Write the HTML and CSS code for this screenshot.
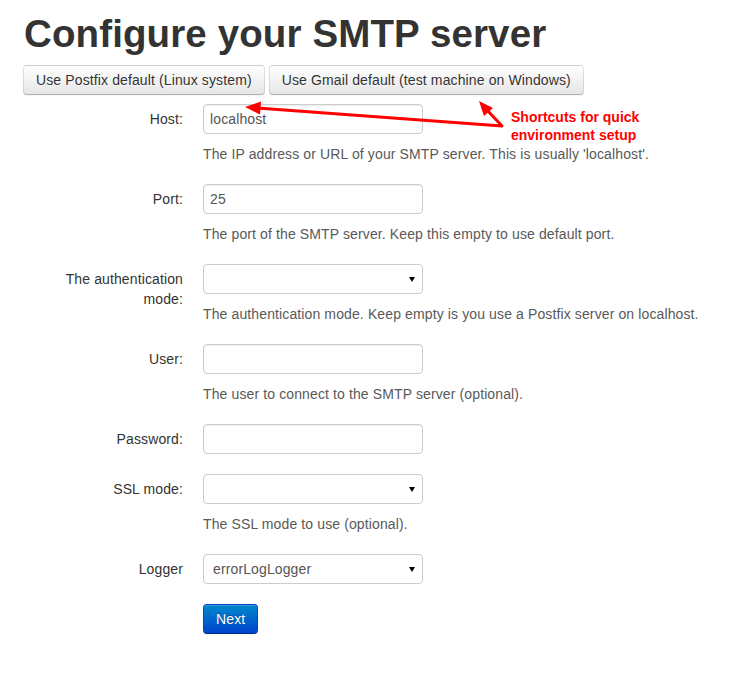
FILE: index.html
```html
<!DOCTYPE html>
<html>
<head>
<meta charset="utf-8">
<link rel="stylesheet" href="styles.css">
</head>
<body>
<div class="page">
  <h1 class="title">Configure your SMTP server</h1>
  <div class="shortcuts">
    <button class="btn">Use Postfix default (Linux system)</button>
    <button class="btn">Use Gmail default (test machine on Windows)</button>
  </div>
  <form class="form">
    <div class="group">
      <label class="label">Host:</label>
      <div class="controls">
        <input class="input" type="text" value="localhost">
        <span class="help">The IP address or URL of your SMTP server. This is usually 'localhost'.</span>
      </div>
    </div>
    <div class="group">
      <label class="label">Port:</label>
      <div class="controls">
        <input class="input" type="text" value="25">
        <span class="help">The port of the SMTP server. Keep this empty to use default port.</span>
      </div>
    </div>
    <div class="group">
      <label class="label">The authentication mode:</label>
      <div class="controls">
        <span class="select-wrap"><select class="select"><option></option></select></span>
        <span class="help">The authentication mode. Keep empty is you use a Postfix server on localhost.</span>
      </div>
    </div>
    <div class="group">
      <label class="label">User:</label>
      <div class="controls">
        <input class="input" type="text" value="">
        <span class="help">The user to connect to the SMTP server (optional).</span>
      </div>
    </div>
    <div class="group">
      <label class="label">Password:</label>
      <div class="controls">
        <input class="input" type="password" value="">
      </div>
    </div>
    <div class="group">
      <label class="label">SSL mode:</label>
      <div class="controls">
        <span class="select-wrap"><select class="select"><option></option></select></span>
        <span class="help">The SSL mode to use (optional).</span>
      </div>
    </div>
    <div class="group">
      <label class="label">Logger</label>
      <div class="controls">
        <span class="select-wrap"><select class="select"><option>errorLogLogger</option></select></span>
      </div>
    </div>
    <div class="group">
      <div class="label"></div>
      <div class="controls">
        <button type="button" class="btn btn-primary">Next</button>
      </div>
    </div>
  </form>
  <div class="note">Shortcuts for quick<br>environment setup</div>
  <svg class="arrows" width="740" height="679" viewBox="0 0 740 679">
    <g stroke="#f00" stroke-width="3" fill="none" stroke-linecap="round" stroke-linejoin="round">
      <polyline points="257,94 502,112 487,96"/>
    </g>
    <g fill="#f00">
      <polygon points="245,93 260,100.5 261,87.5"/>
      <polygon points="479,87 484,102 493,94"/>
    </g>
  </svg>
</div>
</body>
</html>
```

FILE: styles.css
```css
html, body {
  margin: 0;
  padding: 0;
  background: #fff;
}
body {
  font-family: "Liberation Sans", Arial, sans-serif;
  font-size: 14px;
  line-height: 20px;
  letter-spacing: 0.12px;
  color: #333;
}
.page {
  position: relative;
  width: 740px;
  height: 679px;
  padding: 0 0 0 23px;
  box-sizing: border-box;
}
.title {
  font-size: 38.5px;
  line-height: 40px;
  font-weight: bold;
  margin: 14px 0 11px 1px;
  color: #333;
}
.shortcuts {
  display: flex;
  gap: 4px;
  margin-bottom: 9px;
}
.btn {
  font-family: "Liberation Sans", Arial, sans-serif;
  font-size: 14px;
  line-height: 20px;
  letter-spacing: 0.12px;
  padding: 4px 12px;
  color: #333;
  text-shadow: 0 1px 1px rgba(255,255,255,.75);
  background: linear-gradient(to bottom, #ffffff, #e6e6e6);
  border: 1px solid #cccccc;
  border-color: rgba(0,0,0,.1) rgba(0,0,0,.1) #b3b3b3;
  border-radius: 4px;
  box-shadow: inset 0 1px 0 rgba(255,255,255,.2), 0 1px 2px rgba(0,0,0,.05);
  margin: 0;
  cursor: pointer;
}
.btn-primary {
  color: #fff;
  text-shadow: 0 -1px 0 rgba(0,0,0,.25);
  background: linear-gradient(to bottom, #0088cc, #0044cc);
  border-color: #0044cc #0044cc #002a80;
}
.form {
  margin: 0;
}
.group {
  display: grid;
  grid-template-columns: 160px 1fr;
  column-gap: 20px;
  margin-bottom: 20px;
}
.label {
  text-align: right;
  padding-top: 5px;
}
.controls {
  display: flex;
  flex-direction: column;
  align-items: flex-start;
}
.input {
  box-sizing: border-box;
  width: 220px;
  height: 30px;
  padding: 4px 6px;
  font-family: "Liberation Sans", Arial, sans-serif;
  font-size: 14px;
  line-height: 20px;
  letter-spacing: 0.12px;
  color: #555;
  background: #fff;
  border: 1px solid #ccc;
  border-radius: 4px;
  box-shadow: inset 0 1px 1px rgba(0,0,0,.075);
  margin: 0;
}
.select-wrap {
  position: relative;
  display: block;
  width: 220px;
  height: 30px;
}
.select-wrap::after {
  content: "";
  position: absolute;
  right: 8px;
  top: 13px;
  border-left: 3px solid transparent;
  border-right: 3px solid transparent;
  border-top: 5px solid #000;
  pointer-events: none;
}
.select {
  -webkit-appearance: none;
  appearance: none;
  box-sizing: border-box;
  width: 220px;
  height: 30px;
  padding: 0 20px 0 9px;
  font-family: "Liberation Sans", Arial, sans-serif;
  font-size: 14px;
  letter-spacing: 0.12px;
  color: #555;
  background: #fff;
  border: 1px solid #ccc;
  border-radius: 4px;
  margin: 0;
}
.help {
  display: block;
  margin-top: 10px;
  color: #595959;
  white-space: nowrap;
}
.note {
  position: absolute;
  left: 511px;
  top: 94px;
  font-size: 14px;
  line-height: 18px;
  font-weight: bold;
  letter-spacing: 0;
  color: #f00;
}
.arrows {
  position: absolute;
  left: 0;
  top: 0;
  pointer-events: none;
}
```
